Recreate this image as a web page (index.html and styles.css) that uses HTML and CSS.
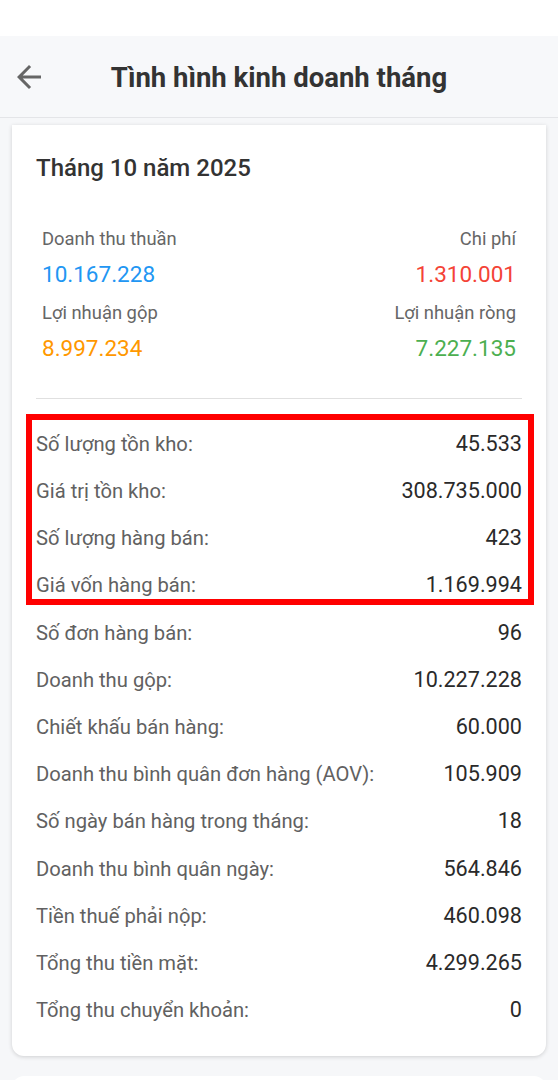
FILE: index.html
```html
<!DOCTYPE html>
<html lang="vi">
<head>
<meta charset="utf-8">
<title>Tình hình kinh doanh tháng</title>
<link rel="stylesheet" href="styles.css">
</head>
<body>
<div class="status-bar"></div>
<header class="app-bar">
  <button class="back" aria-label="Quay lại">
    <svg viewBox="0 0 24 24" width="36" height="36"><path d="M20 11H7.83l5.59-5.59L12 4l-8 8 8 8 1.41-1.41L7.83 13H20v-2z" fill="#666"/></svg>
  </button>
  <h1 class="app-title">Tình hình kinh doanh tháng</h1>
  <span></span>
</header>
<main class="content">
  <section class="card">
    <h2 class="card-title">Tháng 10 năm 2025</h2>
    <div class="stats">
      <div class="stat">
        <div class="stat-label">Doanh thu thuần</div>
        <div class="stat-value blue">10.167.228</div>
      </div>
      <div class="stat right">
        <div class="stat-label">Chi phí</div>
        <div class="stat-value red">1.310.001</div>
      </div>
      <div class="stat">
        <div class="stat-label">Lợi nhuận gộp</div>
        <div class="stat-value orange">8.997.234</div>
      </div>
      <div class="stat right">
        <div class="stat-label">Lợi nhuận ròng</div>
        <div class="stat-value green">7.227.135</div>
      </div>
    </div>
    <hr class="divider">
    <div class="highlight-group">
      <div class="row"><span class="label">Số lượng tồn kho:</span><span class="value">45.533</span></div>
      <div class="row"><span class="label">Giá trị tồn kho:</span><span class="value">308.735.000</span></div>
      <div class="row"><span class="label">Số lượng hàng bán:</span><span class="value">423</span></div>
      <div class="row"><span class="label">Giá vốn hàng bán:</span><span class="value">1.169.994</span></div>
      <div class="highlight-box"></div>
    </div>
    <div class="row"><span class="label">Số đơn hàng bán:</span><span class="value">96</span></div>
    <div class="row"><span class="label">Doanh thu gộp:</span><span class="value">10.227.228</span></div>
    <div class="row"><span class="label">Chiết khấu bán hàng:</span><span class="value">60.000</span></div>
    <div class="row"><span class="label">Doanh thu bình quân đơn hàng (AOV):</span><span class="value">105.909</span></div>
    <div class="row"><span class="label">Số ngày bán hàng trong tháng:</span><span class="value">18</span></div>
    <div class="row"><span class="label">Doanh thu bình quân ngày:</span><span class="value">564.846</span></div>
    <div class="row"><span class="label">Tiền thuế phải nộp:</span><span class="value">460.098</span></div>
    <div class="row"><span class="label">Tổng thu tiền mặt:</span><span class="value">4.299.265</span></div>
    <div class="row"><span class="label">Tổng thu chuyển khoản:</span><span class="value">0</span></div>
  </section>
  <section class="card next"></section>
</main>
</body>
</html>
```
FILE: styles.css
```css
* { box-sizing: border-box; }
html, body {
  margin: 0;
  padding: 0;
}
body {
  width: 558px;
  height: 1080px;
  overflow: hidden;
  background: #f6f7f9;
  font-family: Roboto, "Noto Sans", "Liberation Sans", sans-serif;
  color: #333;
}
.status-bar {
  height: 36px;
  background: #ffffff;
}
.app-bar {
  height: 82px;
  padding-top: 3px;
  background: #f7f8fa;
  border-bottom: 1px solid #e4e5e8;
  display: grid;
  grid-template-columns: 1fr auto 1fr;
  align-items: center;
}
.back {
  justify-self: start;
  margin-left: 11px;
  margin-top: -3px;
  padding: 0;
  border: 0;
  background: transparent;
  width: 36px;
  height: 36px;
  display: flex;
}
.app-title {
  margin: 0;
  font-size: 27.5px;
  font-weight: 700;
  color: #333;
  line-height: 32px;
}
.content {
  padding: 7px 12px 0;
}
.card {
  background: #fff;
  border-radius: 0 0 12px 12px;
  box-shadow: 0 1px 4px rgba(0, 0, 0, 0.16);
  padding: 28px 24px 22px;
}
.card.next {
  margin-top: 20px;
  height: 40px;
  border-radius: 12px 12px 0 0;
  box-shadow: none;
}
.card-title {
  margin: 0;
  font-size: 24px;
  line-height: 30px;
  font-weight: 500;
  color: #333;
}
.stats {
  margin-top: 44px;
  padding: 0 6px;
  display: grid;
  grid-template-columns: 1fr 1fr;
  row-gap: 12.5px;
}
.stat.right { text-align: right; }
.stat-label {
  font-size: 18.4px;
  line-height: 24px;
  color: #666;
}
.stat-value {
  margin-top: 7.5px;
  font-size: 22.5px;
  line-height: 30px;
  font-weight: 400;
}
.blue { color: #2196f3; }
.red { color: #f44336; }
.orange { color: #ff9800; }
.green { color: #4caf50; }
.divider {
  margin: 35.5px 0 0;
  border: 0;
  border-top: 1px solid #e0e0e0;
  height: 0;
}
.highlight-group {
  position: relative;
  margin-top: 21.25px;
}
.highlight-box {
  position: absolute;
  top: -6px;
  bottom: 4px;
  left: -10px;
  right: -12px;
  border: 6px solid #ff0000;
  pointer-events: none;
}
.row {
  height: 47.2px;
  display: flex;
  align-items: center;
  justify-content: space-between;
  line-height: 24px;
}
.label {
  font-size: 20.2px;
  color: #616161;
}
.value {
  font-size: 21.6px;
  font-weight: 400;
  color: #2a2a2a;
}
```
